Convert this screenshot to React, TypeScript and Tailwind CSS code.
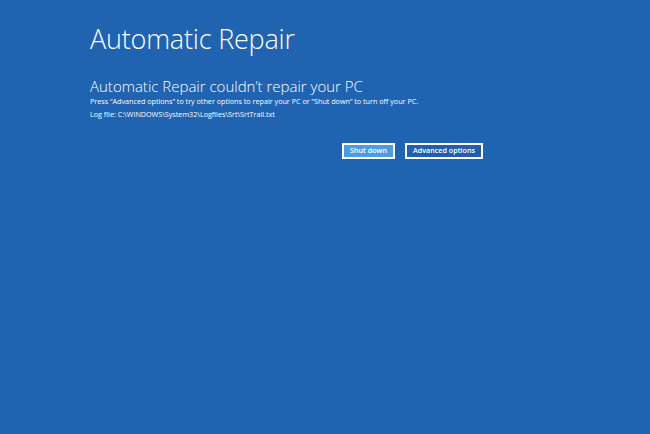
export default function App() {
  return (
    <div
      className="w-[650px] h-[434px] bg-[#1f63b1] text-white overflow-hidden antialiased"
      style={{ fontFamily: '"Open Sans", "Noto Sans", sans-serif' }}
    >
      <div className="pl-[90px] pt-[21px]">
        <h1 className="text-[27px] font-light leading-[36px] tracking-[-0.2px]">Automatic Repair</h1>
        <h2 className="mt-[19px] text-[15px] font-light leading-[20px]">Automatic Repair couldn’t repair your PC</h2>
        <p className="mt-[-1px] text-[7.2px] leading-[12.5px] text-white">
          Press “Advanced options” to try other options to repair your PC or “Shut down” to turn off your PC.
        </p>
        <p className="text-[7.2px] leading-[12.5px] text-white">
          <span className="text-white">Log file:</span> C:\WINDOWS\System32\Logfiles\Srt\SrtTrail.txt
        </p>
        <div className="mt-[23px] flex gap-[10px] pl-[252px]">
          <button className="w-[53px] h-[16px] border-2 border-white bg-[#4a9de0] text-[7.2px] font-semibold leading-none flex items-center justify-center">
            Shut down
          </button>
          <button className="w-[78px] h-[16px] border-2 border-white bg-[#1f5fac] text-[7.2px] font-semibold leading-none flex items-center justify-center">
            Advanced options
          </button>
        </div>
      </div>
    </div>
  );
}
